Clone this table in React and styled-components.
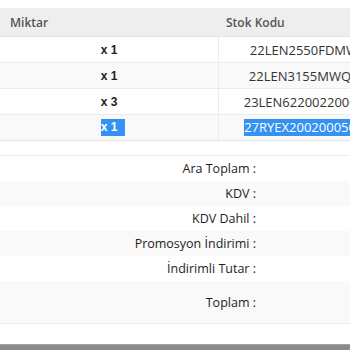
import styled, { createGlobalStyle } from 'styled-components';

const GlobalStyle = createGlobalStyle`
  html, body {
    margin: 0;
    padding: 0;
    overflow: hidden;
    background: #fff;
  }
  body {
    font-family: "Open Sans", "Liberation Sans", sans-serif;
    color: #333;
  }
`;

const Page = styled.div`
  width: 350px;
  height: 350px;
  display: flex;
  flex-direction: column;
  padding-top: 8px;
  box-sizing: border-box;
`;

const Table = styled.div`
  display: grid;
  grid-template-columns: 218px 178px;
  width: 396px;
  border-bottom: 1px solid #e6e6e6;
`;

const HeadCell = styled.div`
  height: 28px;
  display: flex;
  align-items: center;
  padding-left: ${(p) => p.$pad}px;
  background: #eeeeee;
  color: #555;
  font-size: 12px;
  font-weight: 600;
  border-bottom: 1px solid #e4e4e4;
`;

const Cell = styled.div`
  height: 25px;
  display: flex;
  align-items: center;
  justify-content: center;
  white-space: nowrap;
  background: ${(p) => (p.$odd ? '#f9f9f9' : '#fff')};
  border-top: ${(p) => (p.$first ? 'none' : '1px solid #ececec')};
  border-left: ${(p) => (p.$right ? '1px solid #ececec' : 'none')};
  font-size: ${(p) => (p.$right ? '13px' : '12px')};
  font-weight: ${(p) => (p.$right ? 400 : 700)};
  font-family: ${(p) => (p.$right ? '"Open Sans", sans-serif' : '"Liberation Sans", Arial, sans-serif')};
  color: ${(p) => (p.$right ? '#333' : '#222')};
`;

const Selected = styled.span`
  background: #3592f5;
  color: #fff;
  padding-right: ${(p) => (p.$tail ? '8px' : '0')};
  margin-right: ${(p) => (p.$tail ? '-8px' : '0')};
  line-height: 17px;
`;

const Summary = styled.div`
  margin-top: 14px;
  display: flex;
  flex-direction: column;
  border-top: 1px solid #ececec;
  border-bottom: 1px solid #ececec;
`;

const SumRow = styled.div`
  display: grid;
  grid-template-columns: 256px 1fr;
  height: ${(p) => (p.$tall ? 42 : 25)}px;
  align-items: center;
  background: ${(p) => (p.$odd ? '#f9f9f9' : '#fff')};
`;

const SumLabel = styled.div`
  text-align: right;
  color: #1e1e1e;
  font-family: "Open Sans", sans-serif;
  font-size: 12.5px;
`;

const Spacer = styled.div`
  flex: 1;
`;

const BottomBar = styled.div`
  height: 5px;
  background: #8a8a8a;
  border-top: 1px solid #a2a2a2;
`;

const rows = [
  { qty: 'x 1', code: '22LEN2550FDMWT' },
  { qty: 'x 1', code: '22LEN3155MWQRT' },
  { qty: 'x 3', code: '23LEN62200220000T' },
  { qty: 'x 1', code: '27RYEX20020005000', selected: true },
];

const totals = ['Ara Toplam :', 'KDV :', 'KDV Dahil :', 'Promosyon İndirimi :', 'İndirimli Tutar :', 'Toplam :'];

export default function App() {
  return (
    <>
      <GlobalStyle />
      <Page>
        <Table>
          <HeadCell $pad={10}>Miktar</HeadCell>
          <HeadCell $pad={8}>Stok Kodu</HeadCell>
          {rows.map((r, i) => (
            <>
              <Cell key={`q${i}`} $odd={i % 2 === 1} $first={i === 0}>
                {r.selected ? <Selected $tail>{r.qty}</Selected> : r.qty}
              </Cell>
              <Cell key={`c${i}`} $odd={i % 2 === 1} $first={i === 0} $right>
                {r.selected ? <Selected>{r.code}</Selected> : r.code}
              </Cell>
            </>
          ))}
        </Table>
        <Summary>
          {totals.map((t, i) => (
            <SumRow key={t} $odd={i % 2 === 1} $tall={i === totals.length - 1}>
              <SumLabel>{t}</SumLabel>
              <div />
            </SumRow>
          ))}
        </Summary>
        <Spacer />
        <BottomBar />
      </Page>
    </>
  );
}
